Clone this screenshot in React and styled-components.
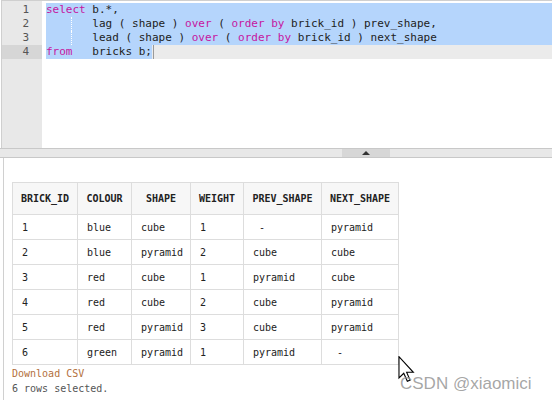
import styled, { createGlobalStyle } from 'styled-components'

const Global = createGlobalStyle`
  html, body { margin: 0; padding: 0; background: #fff; }
  body { width: 552px; height: 400px; overflow: hidden; }
`

const mono = `"DejaVu Sans Mono", "Liberation Mono", monospace`

const Page = styled.div`
  position: relative;
  width: 552px;
  height: 400px;
  display: flex;
  flex-direction: column;
  font-family: ${mono};
`

const Editor = styled.div`
  display: flex;
  height: 147px;
  margin-left: 1px;
  border-top: 1px solid #cfcfcf;
  border-left: 1px solid #cfcfcf;
`

const Gutter = styled.div`
  width: 40px;
  background: #e8e8e8;
  padding-top: 2px;
  flex-shrink: 0;
`

const LineNo = styled.div`
  height: 14px;
  line-height: 14px;
  font-size: 11px;
  text-align: right;
  padding-right: 13px;
  color: #555;
  background: ${p => (p.$active ? '#d6d6d6' : 'transparent')};
`

const Code = styled.div`
  flex: 1;
  padding-top: 2px;
  padding-left: 4px;
  font-size: 11px;
  color: #222;
`

const Line = styled.div`
  position: relative;
  height: 14px;
  line-height: 14px;
  white-space: pre;
  display: flex;
  background: ${p => (p.$selected ? '#b5d5fc' : '#ebebeb')};
`

const Sel = styled.span`
  background: #b5d5fc;
`

const Kw = styled.span`
  color: #c5169f;
`

const Guide = styled.span`
  position: absolute;
  left: 25px;
  top: 0;
  bottom: 0;
  border-left: 1px dotted #fff;
`

const Caret = styled.span`
  width: 1px;
  margin-left: 1px;
  background: #9a9a9a;
`

const Splitter = styled.div`
  height: 8px;
  border-top: 1px solid #c8c8c8;
  border-bottom: 1px solid #c8c8c8;
  background: #e8e8e8;
  padding-left: 342px;
  display: flex;
`

const Handle = styled.div`
  width: 48px;
  background: #d7d7d7;
  display: flex;
  align-items: center;
  justify-content: center;
  &::after {
    content: '';
    border-left: 4px solid transparent;
    border-right: 4px solid transparent;
    border-bottom: 4px solid #333;
  }
`

const Results = styled.div`
  flex: 1;
  margin-left: 3px;
  border-left: 1px solid #d0d0d0;
  padding: 24px 0 0 8px;
  font-size: 10px;
`

const Table = styled.table`
  border-collapse: collapse;
  table-layout: fixed;
  color: #222;
`

const Col = styled.col`
  width: ${p => p.$w}px;
`

const Th = styled.th`
  height: 31px;
  padding: 0;
  font-weight: bold;
  text-align: center;
  background: #f7f7f7;
  border: 1px solid #ddd;
  white-space: pre;
`

const Td = styled.td`
  height: 24px;
  padding: 0 0 0 9px;
  border: 1px solid #ddd;
  white-space: pre;
`

const Download = styled.div`
  margin-top: 1px;
  line-height: 15px;
  color: #b3703c;
`

const Status = styled.div`
  line-height: 16px;
  color: #555;
`

const Watermark = styled.div`
  position: absolute;
  left: 400px;
  top: 374px;
  font-family: "Liberation Sans", Arial, sans-serif;
  font-size: 17px;
  color: rgba(150, 150, 150, 0.85);
  white-space: nowrap;
`

const Pointer = styled.svg`
  position: absolute;
  left: 398px;
  top: 356px;
`

const cols = ['BRICK_ID', 'COLOUR', 'SHAPE', 'WEIGHT', 'PREV_SHAPE', 'NEXT_SHAPE']
const widths = [65, 54, 59, 53, 78, 77]
const rows = [
  ['1', 'blue', 'cube', '1', ' -', 'pyramid'],
  ['2', 'blue', 'pyramid', '2', 'cube', 'cube'],
  ['3', 'red', 'cube', '1', 'pyramid', 'cube'],
  ['4', 'red', 'cube', '2', 'cube', 'pyramid'],
  ['5', 'red', 'pyramid', '3', 'cube', 'pyramid'],
  ['6', 'green', 'pyramid', '1', 'pyramid', ' -'],
]

export default function App() {
  return (
    <Page>
      <Global />
      <Editor>
        <Gutter>
          {[1, 2, 3, 4].map(n => (
            <LineNo key={n} $active={n === 4}>{n}</LineNo>
          ))}
        </Gutter>
        <Code>
          <Line $selected>
            <Kw>select</Kw> b.*,
          </Line>
          <Line $selected>
            <Guide />
            {'       lag ( shape ) '}<Kw>over</Kw>{' ( '}<Kw>order by</Kw>{' brick_id ) prev_shape,'}
          </Line>
          <Line $selected>
            <Guide />
            {'       lead ( shape ) '}<Kw>over</Kw>{' ( '}<Kw>order by</Kw>{' brick_id ) next_shape'}
          </Line>
          <Line>
            <Sel><Kw>from</Kw>{'   bricks b;'}</Sel>
            <Caret />
          </Line>
        </Code>
      </Editor>
      <Splitter>
        <Handle />
      </Splitter>
      <Results>
        <Table>
          <colgroup>
            {widths.map((w, i) => <Col key={i} $w={w} />)}
          </colgroup>
          <thead>
            <tr>{cols.map(c => <Th key={c}>{c}</Th>)}</tr>
          </thead>
          <tbody>
            {rows.map((r, i) => (
              <tr key={i}>{r.map((v, j) => <Td key={j}>{v}</Td>)}</tr>
            ))}
          </tbody>
        </Table>
        <Download>Download CSV</Download>
        <Status>6 rows selected.</Status>
      </Results>
      <Pointer width="17" height="26" viewBox="0 0 12 19">
        <path d="M0.5 0.5 L0.5 16 L4 12.6 L6.6 18.4 L8.6 17.6 L6.1 11.9 L11 11.9 Z" fill="#fff" stroke="#000" strokeWidth="0.8" strokeLinejoin="miter" />
      </Pointer>
      <Watermark>CSDN @xiaomici</Watermark>
    </Page>
  )
}
